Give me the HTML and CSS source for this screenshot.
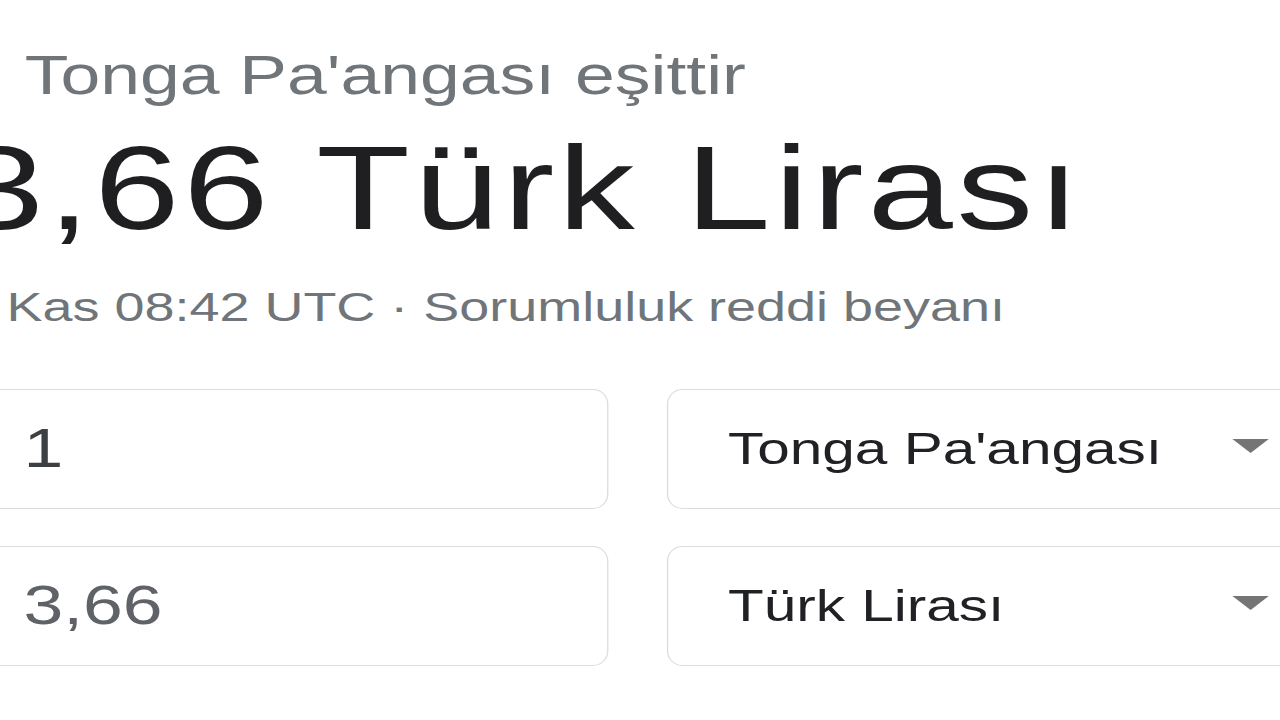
FILE: index.html
```html
<!DOCTYPE html>
<html lang="tr">
<head>
<meta charset="utf-8">
<title>Döviz çevirici</title>
<link rel="stylesheet" href="styles.css">
</head>
<body>
<div class="stage">
  <div class="equals">Tonga Pa'angası eşittir</div>
  <div class="result">3,66 Türk Lirası</div>
  <div class="meta">Kas 08:42 UTC · <span class="link">Sorumluluk reddi beyanı</span></div>
  <div class="converter">
    <div class="row">
      <div class="box amount"><span class="val dark">1</span></div>
      <div class="box select"><span class="cur">Tonga Pa'angası</span><span class="arrow"></span></div>
    </div>
    <div class="row">
      <div class="box amount"><span class="val">3,66</span></div>
      <div class="box select"><span class="cur">Türk Lirası</span><span class="arrow"></span></div>
    </div>
  </div>
</div>
</body>
</html>
```
FILE: styles.css
```css
html, body {
  margin: 0;
  padding: 0;
  background: #ffffff;
  overflow: hidden;
  width: 1280px;
  height: 720px;
}
.stage {
  font-family: "Liberation Sans", Arial, sans-serif;
  transform: scaleX(1.3);
  transform-origin: 0 0;
  width: 1100px;
  padding-top: 48px;
  white-space: nowrap;
}
.equals {
  font-size: 55px;
  line-height: 1;
  color: #70757a;
  padding-left: 19px;
}
.result {
  font-size: 118px;
  line-height: 1;
  letter-spacing: 3px;
  color: #1f1f22;
  margin-top: 26px;
  margin-left: -32px;
}
.meta {
  font-size: 41.5px;
  line-height: 1;
  color: #70757a;
  margin-top: 39px;
  padding-left: 5px;
}
.converter {
  margin-top: 61px;
  display: flex;
  flex-direction: column;
  gap: 37px;
}
.row {
  display: flex;
  gap: 45px;
}
.box {
  flex: none;
  height: 120px;
  box-sizing: border-box;
  border: 1px solid #dadce0;
  border-radius: 12px / 15px;
  background: #fff;
  display: flex;
  align-items: center;
}
.amount {
  margin-left: -30px;
  width: 498px;
  padding-left: 47px;
}
.val {
  font-size: 55px;
  line-height: 1;
  color: #5f6368;
}
.val.dark {
  color: #3c4043;
}
.select {
  width: 600px;
  padding-left: 46px;
  padding-right: 136px;
  justify-content: space-between;
}
.cur {
  font-size: 45px;
  line-height: 1;
  color: #202124;
}
.arrow {
  width: 0;
  height: 0;
  border-left: 14px solid transparent;
  border-right: 14px solid transparent;
  border-top: 14px solid #757575;
  margin-top: -6px;
}
```
